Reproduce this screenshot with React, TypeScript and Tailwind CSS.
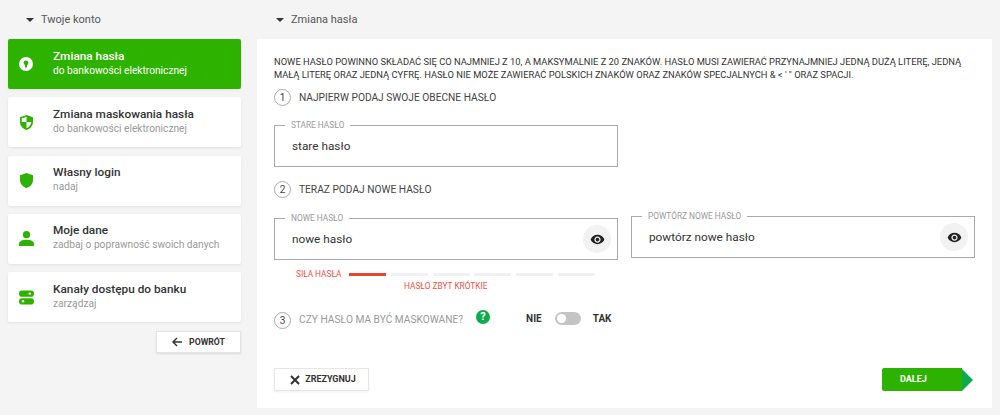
import React from 'react';
import { MdVisibility } from 'react-icons/md';

const GREEN = 'text-[#2eb200]';

const LockIcon = () => (
  <svg width="14" height="14" viewBox="0 0 14 14">
    <circle cx="7" cy="7" r="7" fill="#fff" />
    <circle cx="7" cy="5.8" r="2.4" fill="#2eb200" />
    <rect x="6" y="6.5" width="2" height="4" fill="#2eb200" />
  </svg>
);

const ShieldHalfIcon = () => (
  <svg width="13" height="15" viewBox="0 0 13 15" fill="currentColor" className={GREEN}>
    <path d="M6.5 0 13 2.3v4.6c0 3.7-2.7 6.9-6.5 8.1C2.7 13.8 0 10.6 0 6.9V2.3Z" />
    <path d="M6.5 1.8 1.7 3.5v3.4h4.8ZM6.5 6.9v6.3c2.6-1 4.6-3.4 4.8-6.3Z" fill="#fff" />
  </svg>
);

const ShieldIcon = () => (
  <svg width="13" height="15" viewBox="0 0 13 15" fill="currentColor" className={GREEN}>
    <path d="M6.5 0 13 2.3v4.6c0 3.7-2.7 6.9-6.5 8.1C2.7 13.8 0 10.6 0 6.9V2.3Z" />
  </svg>
);

const PersonIcon = () => (
  <svg width="15" height="15" viewBox="0 0 15 15" fill="currentColor" className={GREEN}>
    <circle cx="7.5" cy="3.7" r="3.6" />
    <path d="M0 15v-2.2C0 10.300 3.400 8.800 7.500 8.800s7.500 1.500 7.500 4V15Z" />
  </svg>
);

const ChannelsIcon = () => (
  <svg width="15" height="15" viewBox="0 0 15 15" className={GREEN}>
    <rect y="0.500" width="15" height="6.300" rx="3.100" fill="currentColor" />
    <rect y="8.200" width="15" height="6.300" rx="3.100" fill="currentColor" />
    <circle cx="10.800" cy="3.600" r="1.200" fill="#fff" />
    <circle cx="4" cy="11.300" r="1.200" fill="#fff" />
  </svg>
);

const BackIcon = () => (
  <svg width="10" height="10" viewBox="0 0 10 10" fill="none" stroke="currentColor" strokeWidth="1.500">
    <path d="M10 5H1M5 1 1 5l4 4" />
  </svg>
);

const CloseIcon = () => (
  <svg width="10" height="10" viewBox="0 0 10 10" fill="none" stroke="currentColor" strokeWidth="2">
    <path d="m1 1 8 8M9 1 1 9" />
  </svg>
);

const menu = [
  { title: 'Zmiana hasła', sub: 'do bankowości elektronicznej', icon: <LockIcon />, active: true },
  { title: 'Zmiana maskowania hasła', sub: 'do bankowości elektronicznej', icon: <ShieldHalfIcon /> },
  { title: 'Własny login', sub: 'nadaj', icon: <ShieldIcon /> },
  { title: 'Moje dane', sub: 'zadbaj o poprawność swoich danych', icon: <PersonIcon /> },
  { title: 'Kanały dostępu do banku', sub: 'zarządzaj', icon: <ChannelsIcon /> },
];

const SectionTitle = ({ children, className }: { children: React.ReactNode; className: string }) => (
  <div className={`flex h-[39px] items-center pt-[1px] text-[11px] text-[#555] ${className}`}>
    <span className="mr-[7px] h-0 w-0 border-x-[4px] border-t-[4px] border-x-transparent border-t-[#333]" />
    {children}
  </div>
);

const Step = ({ n, children, muted }: { n: number; children: React.ReactNode; muted?: boolean }) => (
  <div className="flex items-center">
    <span className="flex h-[17px] w-[17px] items-center justify-center rounded-full border border-[#aaa] text-[10px] text-[#444]">
      {n}
    </span>
    <span className={`ml-[8px] text-[10.200px] ${muted ? 'text-[#999]' : 'text-[#444]'}`}>{children}</span>
  </div>
);

const Field = ({ label, value, eye, className }: { label: string; value: string; eye?: boolean; className?: string }) => (
  <div className={`relative flex h-[42px] w-[344px] items-center border border-[#aaa] pl-[17px] pt-[1px] text-[11.800px] text-[#333] ${className ?? ''}`}>
    <span className="absolute -top-[6px] left-[10px] bg-white px-[6px] text-[8.300px] leading-[10px] text-[#999]">{label}</span>
    {value}
    {eye && (
      <span className="absolute right-[6px] top-[6px] flex h-[28px] w-[28px] items-center justify-center rounded-full bg-[#f2f2f2] text-[#222]">
        <MdVisibility size={15} />
      </span>
    )}
  </div>
);

export default function App() {
  return (
    <div className="flex h-[415px] w-[1000px] overflow-hidden bg-[#f4f4f4] font-['Roboto',sans-serif]">
      <aside className="w-[257px] pl-[8px] pr-[16px]">
        <SectionTitle className="pl-[18px]">Twoje konto</SectionTitle>
        <div className="flex flex-col gap-[8.330px]">
          {menu.map((item) => (
            <div
              key={item.title}
              className={`flex h-[50px] items-center rounded-[2px] shadow-[0_1px_3px_rgba(0,0,0,0.08)] ${item.active ? 'bg-[#2eb200] text-white' : 'bg-white text-[#333]'}`}
            >
              <span className="mr-[9px] flex w-[36px] shrink-0 justify-center">{item.icon}</span>
              <div className="pb-[2px]">
                <div className="text-[11.800px] font-medium leading-[15px]">{item.title}</div>
                <div className={`text-[10.200px] leading-[14px] ${item.active ? 'text-white' : 'text-[#999]'}`}>{item.sub}</div>
              </div>
            </div>
          ))}
        </div>
        <div className="mt-[9px] flex justify-end">
          <button className="flex h-[22px] w-[85px] items-center justify-center gap-[7px] border border-[#e4e4e4] bg-white text-[8.700px] font-bold text-[#333] shadow-[0_1px_2px_rgba(0,0,0,0.1)]">
            <BackIcon />
            POWRÓT
          </button>
        </div>
      </aside>

      <main className="w-[735px]">
        <SectionTitle className="pl-[19px]">Zmiana hasła</SectionTitle>
        <section className="h-[369px] bg-white pl-[17px] pr-[17px] pt-[17px]">
          <p className="whitespace-nowrap text-[9.350px] leading-[12.500px] text-[#333]">
            NOWE HASŁO POWINNO SKŁADAĆ SIĘ CO NAJMNIEJ Z 10, A MAKSYMALNIE Z 20 ZNAKÓW. HASŁO MUSI ZAWIERAĆ PRZYNAJMNIEJ JEDNĄ DUŻĄ LITERĘ, JEDNĄ
            <br />
            MAŁĄ LITERĘ ORAZ JEDNĄ CYFRĘ. HASŁO NIE MOŻE ZAWIERAĆ POLSKICH ZNAKÓW ORAZ ZNAKÓW SPECJALNYCH &amp; &lt; ' " ORAZ SPACJI.
          </p>
          <div className="mt-[8px]">
            <Step n={1}>NAJPIERW PODAJ SWOJE OBECNE HASŁO</Step>
          </div>
          <Field className="mt-[19px]" label="STARE HASŁO" value="stare hasło" />
          <div className="mt-[14px]">
            <Step n={2}>TERAZ PODAJ NOWE HASŁO</Step>
          </div>
          <div className="mt-[20px] flex items-start gap-[13px]">
            <Field label="NOWE HASŁO" value="nowe hasło" eye />
            <Field className="-mt-[2px]" label="POWTÓRZ NOWE HASŁO" value="powtórz nowe hasło" eye />
          </div>
          <div className="mt-[9px] flex h-[10px] w-[321px] items-center pl-[22px]">
            <span className="w-[54px] text-[8.300px] text-[#ef5146]">SIŁA HASŁA</span>
            <div className="flex gap-[4.800px]">
              <span className="h-[3px] w-[37px] bg-[#e8452f]" />
              <span className="h-[3px] w-[37px] bg-[#f1f1f1]" />
              <span className="h-[3px] w-[37px] bg-[#f1f1f1]" />
              <span className="h-[3px] w-[37px] bg-[#f1f1f1]" />
              <span className="h-[3px] w-[37px] bg-[#f1f1f1]" />
              <span className="h-[3px] w-[37px] bg-[#f1f1f1]" />
            </div>
          </div>
          <div className="mt-[2px] w-[344px] pl-[130px] text-[8.300px] leading-[11px] text-[#ef5146]">HASŁO ZBYT KRÓTKIE</div>
          <div className="mt-[18px] flex items-center">
            <Step n={3} muted>
              CZY HASŁO MA BYĆ MASKOWANE?
            </Step>
            <span className="mb-[6px] ml-[13px] flex h-[14px] w-[14px] items-center justify-center rounded-full bg-[#0dab4c] text-[11px] font-bold text-white">?</span>
            <span className="mb-[4px] ml-[36px] text-[10px] font-bold text-[#333]">NIE</span>
            <span className="mb-[4px] ml-[13px] flex h-[13px] w-[26px] items-center rounded-full bg-[#c4c4c4] pl-[2px]">
              <span className="h-[9px] w-[9px] rounded-full bg-white" />
            </span>
            <span className="mb-[4px] ml-[12px] text-[10px] font-bold text-[#333]">TAK</span>
          </div>
          <div className="mt-[38px] flex items-center justify-between pr-[2px]">
            <button className="flex h-[23px] w-[95px] items-center justify-center gap-[5px] border border-[#e6e6e6] bg-white pl-[3px] text-[9px] font-bold text-[#333] shadow-[0_1px_2px_rgba(0,0,0,0.06)]">
              <CloseIcon />
              ZREZYGNUJ
            </button>
            <div className="flex items-center">
              <button className="flex h-[23px] w-[80px] items-center rounded-l-[2px] bg-[#2eb200] pl-[18px] text-[9px] font-bold text-white">DALEJ</button>
              <span className="h-0 w-0 border-y-[11.500px] border-l-[11px] border-y-transparent border-l-[#0dab4c]" />
            </div>
          </div>
        </section>
      </main>
    </div>
  );
}
